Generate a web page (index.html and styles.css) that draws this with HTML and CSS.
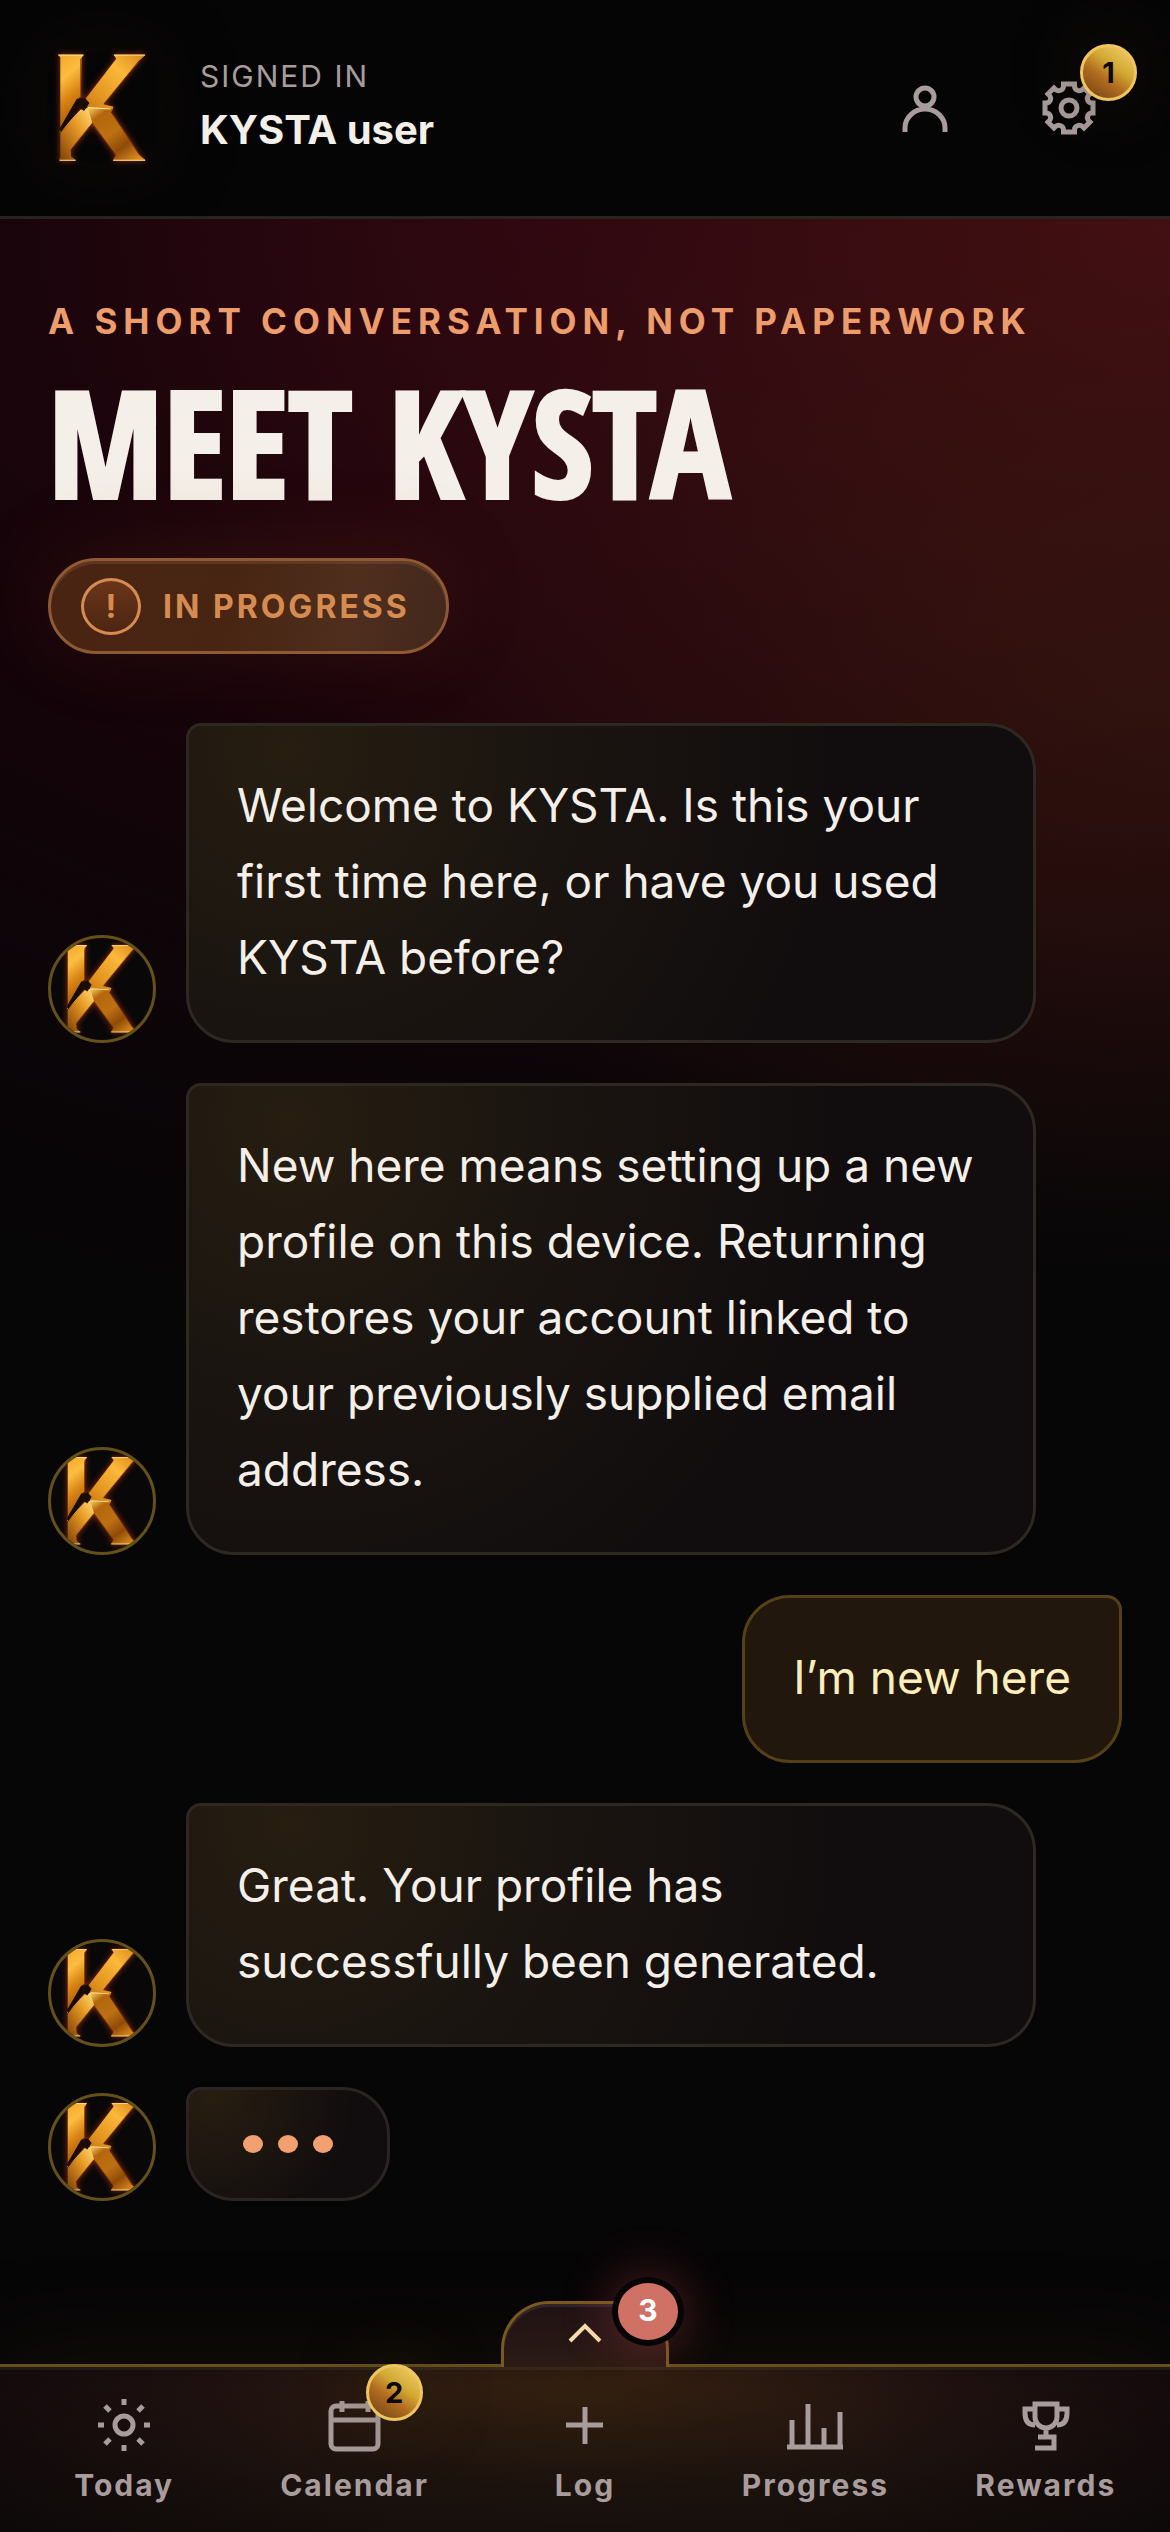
FILE: index.html
```html
<!DOCTYPE html>
<html lang="en">
<head>
<meta charset="utf-8">
<meta name="viewport" content="width=device-width, initial-scale=1">
<title>Meet KYSTA</title>
<link rel="stylesheet" href="styles.css">
</head>
<body>
<svg class="defs" aria-hidden="true">
  <defs>
    <linearGradient id="gold-stem" x1="0" y1="0" x2="0.3" y2="1">
      <stop offset="0" stop-color="#f3a526"/><stop offset="0.35" stop-color="#fdbd40"/><stop offset="0.65" stop-color="#d98413"/><stop offset="1" stop-color="#a85a0a"/>
    </linearGradient>
    <linearGradient id="gold-arm" x1="1" y1="0" x2="0" y2="1">
      <stop offset="0" stop-color="#d98718"/><stop offset="0.35" stop-color="#fbb83a"/><stop offset="0.75" stop-color="#e2951f"/><stop offset="1" stop-color="#c87511"/>
    </linearGradient>
    <linearGradient id="gold-foot" x1="1" y1="0" x2="0" y2="1">
      <stop offset="0" stop-color="#ffe07a"/><stop offset="0.4" stop-color="#e89a24"/><stop offset="1" stop-color="#7c3c06"/>
    </linearGradient>
    <linearGradient id="gold-leg" x1="0" y1="0" x2="0.8" y2="1">
      <stop offset="0" stop-color="#ffd768"/><stop offset="0.2" stop-color="#b4660c"/><stop offset="0.5" stop-color="#bd7012"/><stop offset="0.75" stop-color="#8f4a08"/><stop offset="1" stop-color="#d98a1c"/>
    </linearGradient>
    <symbol id="mark" viewBox="50 40 272 326">
      <path fill="url(#gold-stem)" d="M53 42H131L124 52 122 168 108 178 60 262V50z"/>
      <path fill="url(#gold-arm)" d="M221 42H318L303 56 190 192 221 199 215 212 178 204 142 200 134 178 229 54z"/>
      <path fill="url(#gold-foot)" d="M126 206 146 202 158 247 91 330 93 350 109 362H55L60 350V278z"/>
      <path fill="url(#gold-leg)" d="M142 200 220 205 213 216 300 346 319 362H218L228 346 157 248z"/>
      <path fill="none" stroke="#ffe9a0" stroke-width="3" d="M54 43H130M222 43H316M58 276 124 208M144 202 212 206M58 361H106M220 361H316"/>
      <path fill="none" stroke="#7a3606" stroke-width="3" d="M122 54V168M300 58 194 188M218 220 298 344M94 326 156 250 226 342"/>
      <path fill="#1a0b03" d="M110 176 134 172 148 188 132 212 120 204 60 278V262z"/>
    </symbol>
  </defs>
</svg>

<header class="topbar">
  <a class="brand" href="#home" aria-label="KYSTA home"><svg class="brand-mark"><use href="#mark"/></svg></a>
  <div class="account">
    <span class="account-state">SIGNED IN</span>
    <strong class="account-name">KYSTA user</strong>
  </div>
  <div class="actions">
    <button class="icon-button" type="button" aria-label="Profile">
      <svg class="icon" viewBox="0 0 60 60"><circle cx="30" cy="19" r="9"/><path d="M10 54V50a20 19 0 0 1 40 0V54"/></svg>
    </button>
    <button class="icon-button" type="button" aria-label="Settings, 1 notification">
      <svg class="icon" viewBox="0 0 60 60"><circle cx="30" cy="30" r="8"/><path d="M24.500 6h11v2c0 4 5 6 8 3.500l1.500-1.500 6 6-1.500 1.500c-2.500 3-.5 7.500 3.500 7.500h1v10h-1c-4 0-6 4.500-3.500 7.500l1.500 1.500-6 6-1.500-1.500c-3-2.500-8-.5-8 3.500v2h-11v-2c0-4-5-6-8-3.500l-1.500 1.500-6-6 1.500-1.500c2.500-3 .5-7.500-3.500-7.500h-1v-10h1c4 0 6-4.500 3.500-7.500l-1.500-1.500 6-6 1.500 1.500c3 2.500 8 .5 8-3.500z"/></svg>
      <span class="coin">1</span>
    </button>
  </div>
</header>

<main class="page">
  <p class="eyebrow">A SHORT CONVERSATION, NOT PAPERWORK</p>
  <h1 class="title">MEET KYSTA</h1>
  <p class="status"><span class="status-icon">!</span>IN PROGRESS</p>

  <section class="chat" aria-label="Conversation">
    <div class="message">
      <span class="avatar"><svg class="avatar-mark"><use href="#mark"/></svg></span>
      <p class="bubble">Welcome to KYSTA. Is this your first time here, or have you used KYSTA before?</p>
    </div>
    <div class="message">
      <span class="avatar"><svg class="avatar-mark"><use href="#mark"/></svg></span>
      <p class="bubble">New here means setting up a new profile on this device. Returning restores your account linked to your previously supplied email address.</p>
    </div>
    <p class="bubble reply">I’m new here</p>
    <div class="message">
      <span class="avatar"><svg class="avatar-mark"><use href="#mark"/></svg></span>
      <p class="bubble">Great. Your profile has successfully been generated.</p>
    </div>
    <div class="message">
      <span class="avatar"><svg class="avatar-mark"><use href="#mark"/></svg></span>
      <div class="typing" role="status" aria-label="KYSTA is typing"><i></i><i></i><i></i></div>
    </div>
  </section>
</main>

<nav class="tabbar" aria-label="Main">
  <button class="drawer" type="button" aria-label="Open drawer, 3 items">
    <svg class="chevron" viewBox="0 0 36 24"><path d="M3 20 18 5l15 15"/></svg>
    <span class="alert">3</span>
  </button>
  <a class="tab" href="#today">
    <svg class="icon" viewBox="0 0 60 60"><circle cx="30" cy="30" r="9"/><path d="M30 4v6M30 50v6M4 30h6M50 30h6M11 11l5 5M44 44l5 5M11 49l5-5M44 16l5-5"/></svg>
    Today
  </a>
  <a class="tab" href="#calendar">
    <span class="tab-icon">
      <svg class="icon" viewBox="0 0 60 60"><rect x="6" y="11" width="47" height="43" rx="5"/><path d="M6 25h47M17 6v11M43 6v11"/></svg>
      <span class="coin coin-tab">2</span>
    </span>
    Calendar
  </a>
  <a class="tab" href="#log">
    <svg class="icon" viewBox="0 0 60 60"><path d="M30 12v37M11 30h37"/></svg>
    Log
  </a>
  <a class="tab" href="#progress">
    <svg class="icon" viewBox="0 0 60 60"><path d="M2 52h56M7 52V25M23 52V9M39 52V33M55 52V17"/></svg>
    Progress
  </a>
  <a class="tab" href="#rewards">
    <svg class="icon" viewBox="0 0 60 60"><path d="M19 9h22v13a11 11 0 0 1-22 0zM19 14H9v4q0 12 10 12M41 14h10v4q0 12-10 12M30 33v8M22 42h16v11H19"/></svg>
    Rewards
  </a>
</nav>
</body>
</html>
```
FILE: styles.css
```css
:root {
  --cream: #f4efe8;
  --muted: #a89c9c;
  --gold-line: #65501a;
  --amber: #ed9c6b;
}

* {
  box-sizing: border-box;
}

body {
  margin: 0;
  min-height: 100vh;
  display: flex;
  flex-direction: column;
  background: #070607;
  color: var(--cream);
  font-family: Inter, "Liberation Sans", sans-serif;
}

.defs {
  position: absolute;
  width: 0;
  height: 0;
}

p,
h1 {
  margin: 0;
}

a {
  color: inherit;
  text-decoration: none;
}

button {
  padding: 0;
  border: 0;
  background: none;
  color: inherit;
  font: inherit;
}

.icon {
  display: block;
  width: 60px;
  height: 60px;
  fill: none;
  stroke: var(--muted);
  stroke-width: 5;
}

/* Header */
.topbar {
  display: flex;
  align-items: center;
  gap: 44px;
  height: 219px;
  padding: 0 51px 0 48px;
  border-bottom: 3px solid #272421;
  background: #060506;
}

.brand {
  display: flex;
  justify-content: center;
  width: 108px;
  border-radius: 24px;
  box-shadow: 0 0 70px #15100680;
}

.brand-mark {
  width: 90px;
  height: 108px;
  filter: drop-shadow(0 0 3px #8a2c08);
}

.account {
  display: flex;
  flex-direction: column;
  flex: 1;
  padding-bottom: 8px;
}

.account-state {
  color: var(--muted);
  font-size: 30px;
  line-height: 52px;
  letter-spacing: 2px;
}

.account-name {
  font-size: 40px;
  line-height: 56px;
}

.actions {
  display: flex;
  gap: 44px;
}

.icon-button {
  position: relative;
  display: grid;
  place-items: center;
  width: 100px;
  height: 100px;
}

.coin {
  position: absolute;
  top: -14px;
  right: -18px;
  display: grid;
  place-items: center;
  width: 57px;
  height: 57px;
  border: 3px solid #eec560;
  border-radius: 50%;
  background: linear-gradient(215deg, #f0cc68 5%, #d2a932 38%, #b26d20 60%, #7c4a18 90%);
  box-shadow: 0 0 70px #3a2c0c66;
  color: #0c0806;
  font-size: 29px;
  font-weight: 700;
  line-height: 1;
}

/* Intro */
.page {
  flex: 1;
  padding: 78px 48px 160px;
  background:
    radial-gradient(ellipse 70% 30% at 100% 20%, #38200e70, #38200e30 55%, transparent),
    radial-gradient(ellipse 95% 46% at 100% 0%, #480d13e8, #3a0a1190 50%, transparent),
    radial-gradient(ellipse 130% 52% at 50% 0%, #280610, #16040a 50%, #0b0508 80%, transparent);
}

.eyebrow {
  color: var(--amber);
  font-size: 35px;
  font-weight: 700;
  line-height: 48px;
  letter-spacing: 6px;
}

.title {
  margin-top: 16px;
  font-family: "Open Sans Condensed", "Roboto Condensed", sans-serif;
  font-size: 147px;
  font-weight: 700;
  line-height: 160px;
  -webkit-text-stroke: 4px var(--cream);
}

.status {
  display: inline-flex;
  align-items: center;
  gap: 22px;
  height: 96px;
  margin-top: 37px;
  padding: 0 36px 0 30px;
  border: 3px solid #8f5933;
  border-radius: 48px;
  background: linear-gradient(100deg, #4a2413, #482512 45%, #4f2e1e 75%, #42281c);
  box-shadow: 0 -8px 80px #70381838, inset 0 3px #ffb07020;
  color: #d68c50;
  font-size: 32px;
  font-weight: 700;
  letter-spacing: 3px;
}

.status-icon {
  display: grid;
  place-items: center;
  width: 60px;
  height: 57px;
  border: 3px solid #d68c50;
  border-radius: 50%;
  background: linear-gradient(#6a3518, #4c2613);
  letter-spacing: 0;
}

/* Conversation */
.chat {
  display: flex;
  flex-direction: column;
  gap: 40px;
  margin-top: 69px;
}

.message {
  display: flex;
  align-items: flex-end;
  gap: 30px;
  width: 92%;
}

.avatar {
  display: grid;
  flex: none;
  place-items: center;
  width: 108px;
  height: 108px;
  overflow: hidden;
  border: 3px solid #65501a;
  border-radius: 50%;
  background: #090708;
}

.avatar-mark {
  width: 74px;
  height: 90px;
  filter: drop-shadow(0 0 3px #8a2c08);
}

.bubble {
  flex: 1;
  padding: 41px 48px 45px;
  border: 3px solid #2e2822;
  border-radius: 15px 48px 48px 48px;
  background: radial-gradient(circle 560px at 12% 8%, #271d11, #1a1510 45%, #110d0e);
  font-size: 46px;
  line-height: 76px;
}

.reply {
  flex: none;
  align-self: flex-end;
  border-color: #564117;
  border-radius: 48px 15px 48px 48px;
  background: #21170d;
  color: #fdeeba;
}

.typing {
  display: flex;
  align-items: center;
  gap: 15px;
  height: 114px;
  padding: 0 54px;
  border: 3px solid #2a2523;
  border-radius: 15px 48px 48px 48px;
  background: radial-gradient(circle 140px at 12% 8%, #271d11, #110d0e);
}

.typing i {
  width: 20px;
  height: 18px;
  border-radius: 50%;
  background: #f2a06f;
}

/* Bottom navigation */
.tabbar {
  position: sticky;
  bottom: 0;
  display: grid;
  grid-template-columns: repeat(5, 1fr);
  height: 168px;
  padding: 28px 9px 0;
  border-top: 3px solid var(--gold-line);
  background:
    radial-gradient(ellipse 60% 130% at 50% 60%, transparent 40%, #06050699),
    linear-gradient(#06050600 10%, #0d0c08b0),
    radial-gradient(ellipse 62% 150% at 50% 20%, #33200f, #261512 50%, #220e13);
  box-shadow: inset 0 3px #ffffff0d, 0 0 100px #2a1e0a66;
}

.tab {
  display: flex;
  flex-direction: column;
  align-items: center;
  gap: 10px;
  color: var(--muted);
  font-size: 30px;
  font-weight: 700;
  line-height: 40px;
  letter-spacing: 2px;
}

.tab-icon {
  position: relative;
}

.coin-tab {
  top: -31px;
  right: -38px;
  letter-spacing: 0;
}

.drawer {
  position: absolute;
  bottom: 165px;
  left: 50%;
  display: grid;
  place-items: center;
  width: 168px;
  height: 66px;
  padding-bottom: 5px;
  transform: translateX(-50%);
  border: 3px solid #79591f;
  border-bottom: 0;
  border-radius: 48px 48px 0 0;
  background: linear-gradient(#1f1115, #2c1b14);
  box-shadow: inset 0 3px #ffffff14;
}

.chevron {
  width: 36px;
  height: 24px;
  fill: none;
  stroke: #f6e0ae;
  stroke-width: 4;
}

.alert {
  position: absolute;
  top: -27px;
  right: -18px;
  display: grid;
  place-items: center;
  width: 72px;
  height: 69px;
  padding-bottom: 3px;
  border: 6px solid #070506;
  border-radius: 50%;
  background: #d07165;
  box-shadow: 0 0 50px #c0404870;
  color: #fff;
  font-size: 30px;
  font-weight: 700;
}
```
